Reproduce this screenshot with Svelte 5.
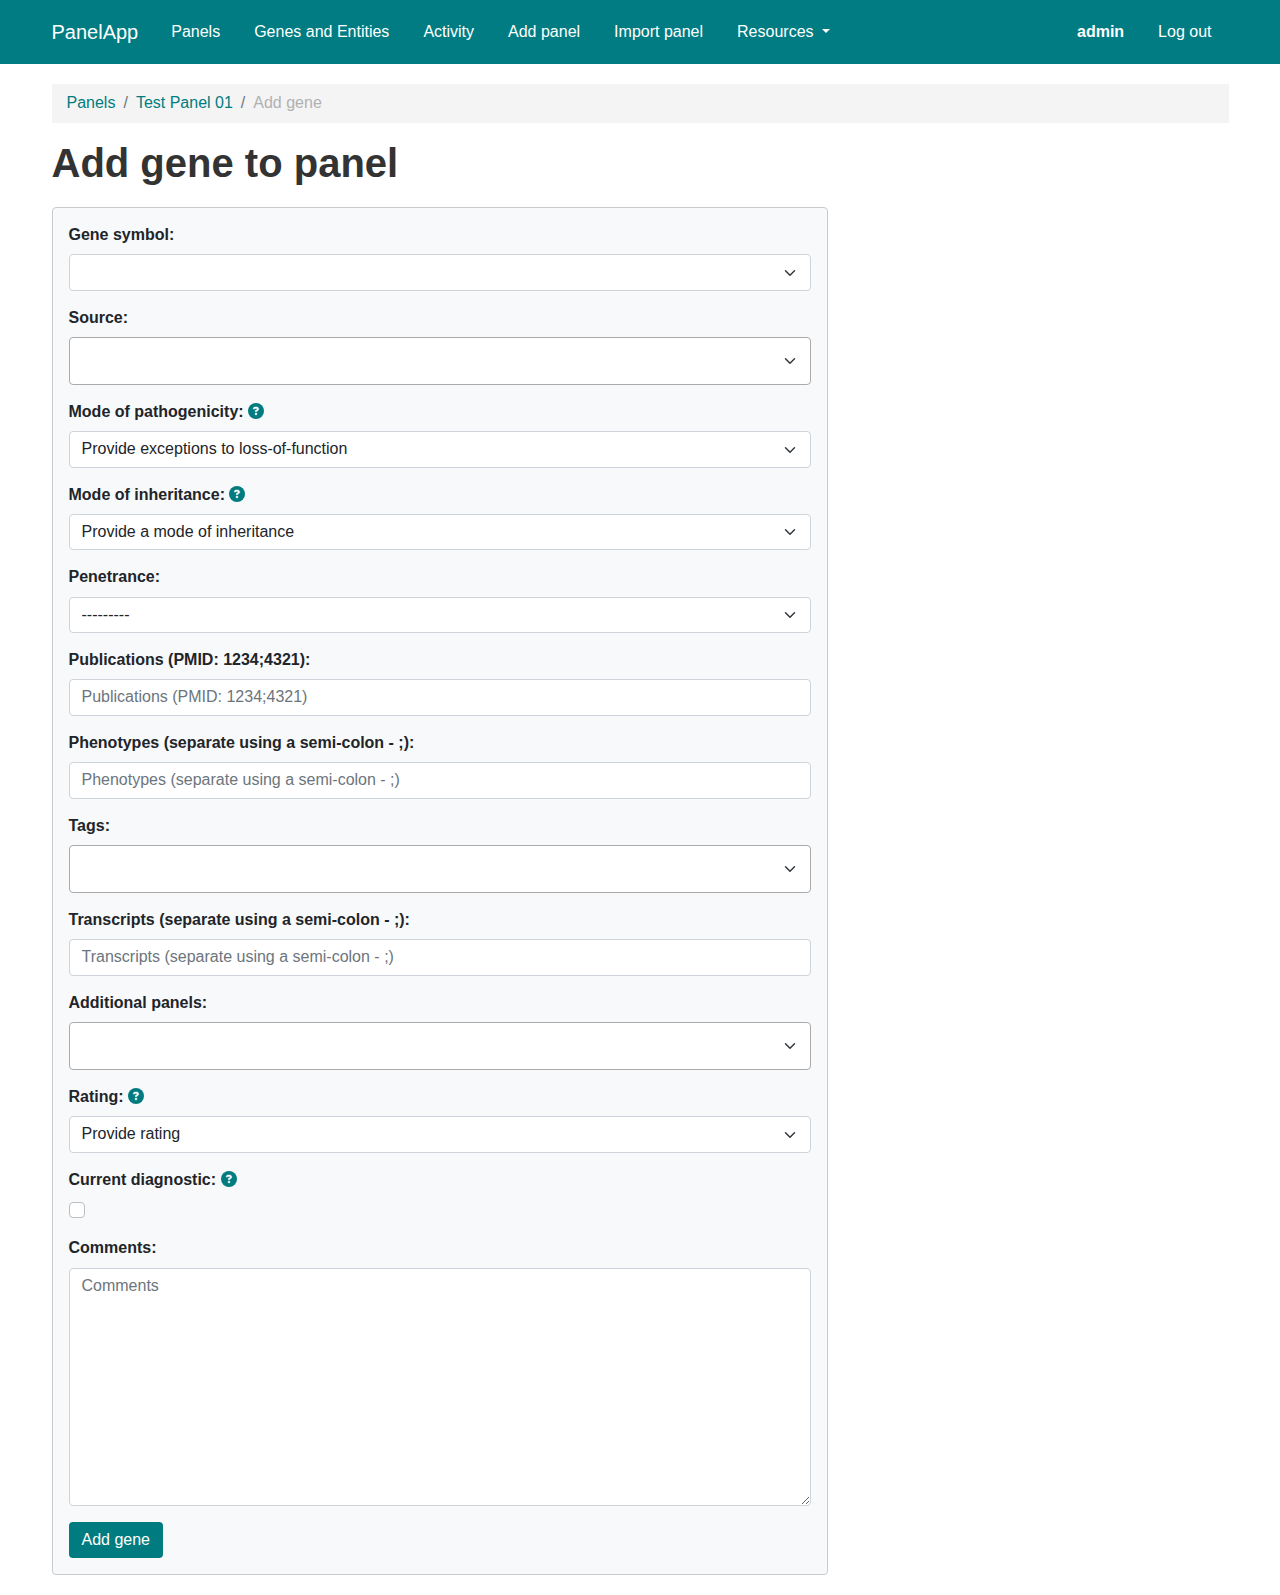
<script>
  const navLinks = ['Panels', 'Genes and Entities', 'Activity', 'Add panel', 'Import panel'];

  const fields = [
    { label: 'Gene symbol:', kind: 'select', value: '' },
    { label: 'Source:', kind: 'multi' },
    { label: 'Mode of pathogenicity:', kind: 'select', value: 'Provide exceptions to loss-of-function', help: true },
    { label: 'Mode of inheritance:', kind: 'select', value: 'Provide a mode of inheritance', help: true },
    { label: 'Penetrance:', kind: 'select', value: '---------' },
    { label: 'Publications (PMID: 1234;4321):', kind: 'text', placeholder: 'Publications (PMID: 1234;4321)' },
    { label: 'Phenotypes (separate using a semi-colon - ;):', kind: 'text', placeholder: 'Phenotypes (separate using a semi-colon - ;)' },
    { label: 'Tags:', kind: 'multi' },
    { label: 'Transcripts (separate using a semi-colon - ;):', kind: 'text', placeholder: 'Transcripts (separate using a semi-colon - ;)' },
    { label: 'Additional panels:', kind: 'multi' },
    { label: 'Rating:', kind: 'select', value: 'Provide rating', help: true },
    { label: 'Current diagnostic:', kind: 'check', help: true },
    { label: 'Comments:', kind: 'area', placeholder: 'Comments' },
  ];
</script>

<header class="navbar">
  <a class="brand" href="#home">PanelApp</a>
  <nav class="links">
    {#each navLinks as link}
      <a href="#nav">{link}</a>
    {/each}
    <a class="dropdown" href="#resources">Resources</a>
  </nav>
  <nav class="links account">
    <a class="user" href="#user">admin</a>
    <a href="#logout">Log out</a>
  </nav>
</header>

<main>
  <ol class="breadcrumb">
    <li><a href="#panels">Panels</a></li>
    <li><a href="#panel">Test Panel 01</a></li>
    <li class="active">Add gene</li>
  </ol>

  <h1>Add gene to panel</h1>

  <form class="card">
    {#each fields as field, i}
      <div class="field">
        <label for="f{i}">
          {field.label}
          {#if field.help}
            <svg class="help" viewBox="0 0 512 512" aria-hidden="true">
              <circle cx="256" cy="256" r="256" />
              <path class="mark" d="M169.8 165.3c7.9-22.3 29.1-37.3 52.8-37.3h58.3c34.9 0 63.1 28.3 63.1 63.1c0 22.6-12.1 43.5-31.7 54.8L280 264.4c-.2 13-10.9 23.6-24 23.6c-13.3 0-24-10.7-24-24V250.5c0-8.6 4.6-16.5 12.1-20.8l44.3-25.4c4.7-2.7 7.6-7.7 7.6-13.1c0-8.4-6.8-15.1-15.1-15.1H222.6c-3.4 0-6.4 2.1-7.5 5.3l-.4 1.2c-4.4 12.5-18.2 19-30.6 14.6s-19-18.2-14.6-30.6l.4-1.2zM224 352a32 32 0 1 1 64 0 32 32 0 1 1 -64 0z" />
            </svg>
          {/if}
        </label>
        {#if field.kind === 'select'}
          <button type="button" id="f{i}" class="control select">{field.value}</button>
        {:else if field.kind === 'multi'}
          <button type="button" id="f{i}" class="control select multi" aria-label={field.label}></button>
        {:else if field.kind === 'text'}
          <input id="f{i}" class="control" type="text" placeholder={field.placeholder} />
        {:else if field.kind === 'check'}
          <div class="check"><input id="f{i}" type="checkbox" /></div>
        {:else}
          <textarea id="f{i}" class="control" rows="10" placeholder={field.placeholder}></textarea>
        {/if}
      </div>
    {/each}
    <button type="button" class="submit">Add gene</button>
  </form>
</main>

<style>
  :global(body) {
    margin: 0;
    background: #fff;
    color: #212529;
    font-family: 'Liberation Sans', Arial, sans-serif;
    font-size: 16px;
    line-height: 1.4;
  }

  a {
    color: #007c80;
    text-decoration: none;
  }

  .navbar {
    box-sizing: border-box;
    height: 64px;
    padding: 0 51.5px;
    display: flex;
    align-items: center;
    background: #007c82;
  }

  .navbar a {
    color: #fff;
  }

  .brand {
    font-size: 20px;
    margin-right: 16px;
  }

  .links {
    display: flex;
  }

  .links a {
    padding: 0 17px;
  }

  .account {
    margin-left: auto;
  }

  .user {
    font-weight: 700;
  }

  .dropdown::after {
    content: '';
    display: inline-block;
    margin-left: 8px;
    vertical-align: 4.08px;
    border-top: 4.8px solid;
    border-right: 4.8px solid transparent;
    border-bottom: 0;
    border-left: 4.8px solid transparent;
  }

  main {
    padding: 20px 51.5px 20px;
  }

  .breadcrumb {
    list-style: none;
    display: flex;
    box-sizing: border-box;
    height: 39px;
    margin: 0 0 16px;
    padding: 7.5px 15px;
    background: #f4f4f4;
  }

  .breadcrumb li + li::before {
    content: '/';
    padding: 0 8px;
    color: #6c757d;
  }

  .breadcrumb .active {
    color: #b1b1b1;
  }

  h1 {
    margin: 0 0 19.86px;
    font-size: 40px;
    line-height: 48px;
    font-weight: 700;
    color: #333;
  }

  .card {
    box-sizing: border-box;
    width: 776.67px;
    padding: 16px;
    border: 1px solid #c8cbce;
    border-radius: 4px;
    background: #f8f9fb;
  }

  .field {
    margin-bottom: 15.97px;
  }

  label {
    display: block;
    height: 22.4px;
    margin-bottom: 8px;
    font-weight: 700;
  }

  .help {
    width: 16px;
    height: 16px;
    vertical-align: -2px;
    fill: #007c80;
  }

  .help .mark {
    fill: #fff;
    stroke: #fff;
    stroke-width: 14;
  }

  .control {
    box-sizing: border-box;
    display: block;
    width: 100%;
    height: 36.4px;
    margin: 0;
    padding: 5.9px 12px 6px;
    border: 1px solid #ced4da;
    border-radius: 4px;
    background: #fff;
    color: #212529;
    font: inherit;
    text-align: left;
  }

  input.control {
    padding: 5.75px 12px 6.25px;
  }

  .control::placeholder {
    color: #6c757d;
    opacity: 1;
  }

  .select {
    background: #fff
      url("data:image/svg+xml,%3csvg xmlns='http://www.w3.org/2000/svg' viewBox='0 0 16 16'%3e%3cpath fill='none' stroke='%23343a40' stroke-linecap='round' stroke-linejoin='round' stroke-width='2' d='m2 5 6 6 6-6'/%3e%3c/svg%3e")
      no-repeat right 12px top calc(50% + 0.2px) / 16px 12px;
  }

  .multi {
    height: 47.86px;
    border-color: #aaa;
    background-position: right 12px center;
  }

  textarea.control {
    height: 238px;
    resize: vertical;
  }

  .check {
    height: 22.6px;
    padding-top: 3.2px;
    box-sizing: border-box;
  }

  .check input {
    appearance: none;
    box-sizing: border-box;
    display: block;
    width: 16px;
    height: 16px;
    margin: 0;
    border: 1px solid #bfbfbf;
    border-radius: 4px;
    background: #fff;
  }

  .submit {
    display: block;
    height: 36.4px;
    padding: 6px 13px;
    border: 0;
    border-radius: 4px;
    background: #007c80;
    color: #fff;
    font: inherit;
  }
</style>
